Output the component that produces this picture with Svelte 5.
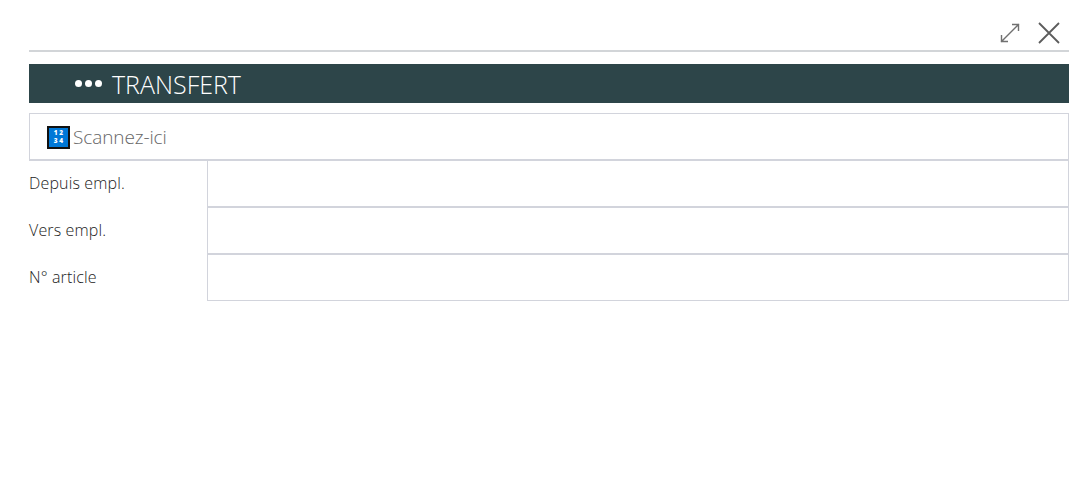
<script>
	const fields = ['Depuis empl.', 'Vers empl.', 'N° article'];
</script>

<div class="page">
	<div class="toolbar">
		<svg class="icon" width="22" height="22" viewBox="0 0 22 22" fill="none" stroke="#707070" stroke-width="1.4">
			<path d="M2 20 20 2M13 2.500h6.500V9M2.500 13v6.500H9" />
		</svg>
		<svg class="icon" width="22" height="22" viewBox="0 0 22 22" fill="none" stroke="#5c5c5c" stroke-width="1.8">
			<path d="M1 1 21 21M21 1 1 21" />
		</svg>
	</div>

	<header class="title">
		<span class="dots"><i></i><i></i><i></i></span>
		<h1>TRANSFERT</h1>
	</header>

	<div class="scan">
		<span class="keypad"><b>1 2</b><b>3 4</b></span>
		<span class="placeholder">Scannez-ici</span>
	</div>

	{#each fields as label}
		<div class="row">
			<div class="label">{label}</div>
			<div class="value"></div>
		</div>
	{/each}
</div>

<style>
	:global(body) {
		background: #fff;
	}

	.page {
		padding: 0 20px 0 29px;
		font-family: 'Open Sans', 'Liberation Sans', sans-serif;
		color: #222;
	}

	.toolbar {
		height: 28px;
		display: flex;
		justify-content: flex-end;
		align-items: flex-start;
		gap: 17px;
		padding: 22px 9px 0 0;
		border-bottom: 2px solid #d2d5d8;
	}

	.icon {
		display: block;
	}

	.title {
		margin-top: 12px;
		height: 39px;
		background: #2d4549;
		color: #fff;
		display: flex;
		align-items: center;
		padding-left: 46px;
		gap: 10px;
	}

	.dots {
		display: flex;
		gap: 3px;
	}

	.dots i {
		width: 7px;
		height: 7px;
		border-radius: 50%;
		background: #fff;
	}

	h1 {
		margin: 0;
		font-size: 25px;
		font-weight: 300;
	}

	.scan {
		margin-top: 10px;
		height: 48px;
		box-sizing: border-box;
		border: 1px solid #d2d4dc;
		border-bottom-width: 2px;
		display: flex;
		align-items: center;
		padding-left: 17px;
	}

	.keypad {
		width: 23px;
		height: 23px;
		box-sizing: border-box;
		background: #0078d7;
		border: 2px solid #111;
		color: #fff;
		font: 700 6.500px/8px 'Open Sans', sans-serif;
		display: flex;
		flex-direction: column;
		align-items: center;
		justify-content: center;
		flex-shrink: 0;
		margin-top: 1px;
	}

	.keypad b {
		display: block;
		white-space: pre;
	}

	.placeholder {
		font-size: 19px;
		font-weight: 300;
		color: #666;
		margin-left: 3px;
		letter-spacing: -0.1px;
	}

	.row {
		display: flex;
		height: 47px;
	}

	.row:last-child {
		height: 46px;
	}

	.label {
		width: 178px;
		flex-shrink: 0;
		font-size: 16px;
		font-weight: 300;
		line-height: 47px;
		letter-spacing: 0.15px;
		margin-top: -1px;
	}

	.value {
		flex: 1;
		box-sizing: border-box;
		border: 1px solid #d2d4dc;
		border-top: 0;
		border-bottom: 2px solid #d2d4dc;
	}

	.row:last-child .value {
		border-bottom-width: 1px;
	}
</style>
